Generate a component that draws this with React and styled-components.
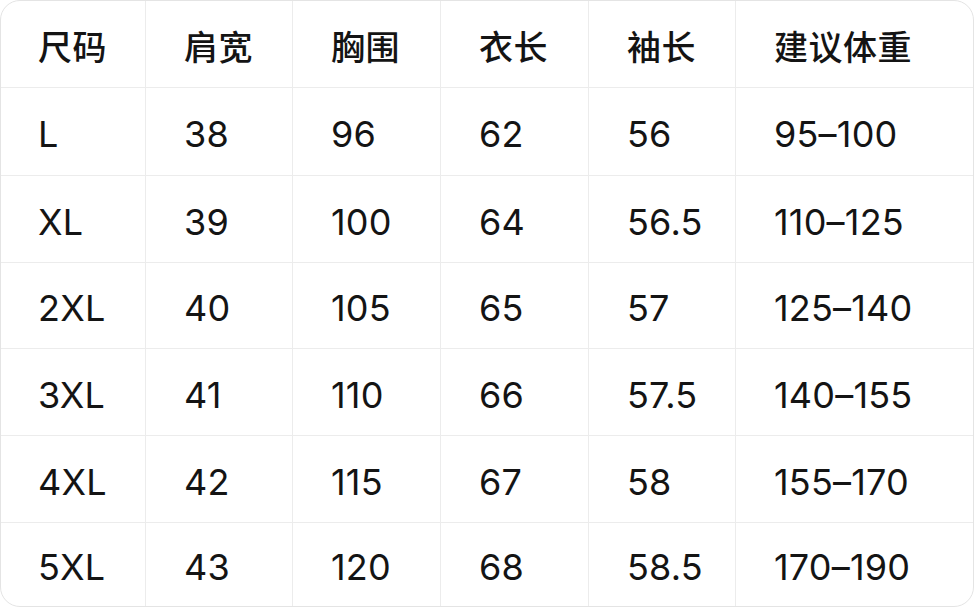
import React from "react";
import styled, { createGlobalStyle } from "styled-components";

const Global = createGlobalStyle`
  html, body { margin: 0; padding: 0; background: #ffffff; }
  body { font-family: Inter, "Noto Sans CJK SC", sans-serif; }
`;

const Frame = styled.div`
  box-sizing: border-box;
  width: 974px;
  height: 607px;
  border: 1px solid #e4e4e4;
  border-radius: 20px;
  overflow: hidden;
  display: grid;
  grid-template-columns: 145px 147px 148px 148px 147px 1fr;
  grid-template-rows: 87px 88px 87px 86px 87px 87px 1fr;
  background: #fff;
`;

const Cell = styled.div`
  box-sizing: border-box;
  display: flex;
  align-items: center;
  padding-left: ${(p) => (p.$first ? 37 : 38)}px;
  padding-top: ${(p) => (p.$head ? 2 : 5)}px;
  border-right: ${(p) => (p.$last ? "none" : "1px solid #ececec")};
  border-bottom: ${(p) => (p.$bottom ? "none" : "1.5px solid #ececec")};
  font-family: Inter, "Noto Sans CJK SC", sans-serif;
  font-size: ${(p) => (p.$head ? 34 : 36)}px;
  font-weight: ${(p) => (p.$head ? 500 : 400)};
  color: #141414;
  letter-spacing: ${(p) => (p.$head ? "0.5px" : "0.2px")};
`;

const head = ["尺码", "肩宽", "胸围", "衣长", "袖长", "建议体重"];
const rows = [
  ["L", "38", "96", "62", "56", "95–100"],
  ["XL", "39", "100", "64", "56.5", "110–125"],
  ["2XL", "40", "105", "65", "57", "125–140"],
  ["3XL", "41", "110", "66", "57.5", "140–155"],
  ["4XL", "42", "115", "67", "58", "155–170"],
  ["5XL", "43", "120", "68", "58.5", "170–190"],
];

export default function App() {
  const all = [head, ...rows];
  return (
    <>
      <Global />
      <Frame>
        {all.map((r, ri) =>
          r.map((c, ci) => (
            <Cell
              key={ri + "-" + ci}
              $head={ri === 0}
              $first={ci === 0}
              $last={ci === r.length - 1}
              $bottom={ri === all.length - 1}
            >
              {c}
            </Cell>
          ))
        )}
      </Frame>
    </>
  );
}
